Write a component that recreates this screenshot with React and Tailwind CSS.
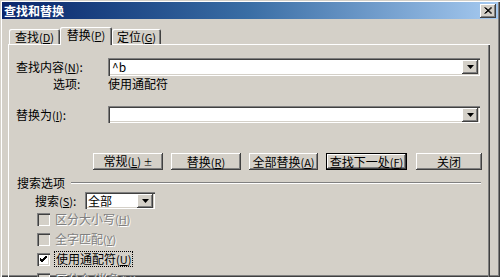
import React from 'react';

const sunken = 'bg-white shadow-[inset_1px_1px_0_#808080,inset_2px_2px_0_#404040,inset_-1px_-1px_0_#ffffff,inset_-2px_-2px_0_#d4d0c8]';
const raised = 'bg-[#d4d0c8] shadow-[inset_-1px_-1px_0_#404040,inset_1px_1px_0_#ffffff,inset_-2px_-2px_0_#808080,inset_2px_2px_0_#d4d0c8]';

const Arrow = () => (
  <div className={`${raised} w-[16px] h-[14px] flex items-center justify-center shrink-0`}>
    <svg width="7" height="4" viewBox="0 0 7 4">
      <polygon points="0,0 7,0 3.5,4" fill="#000" />
    </svg>
  </div>
);

const Key = ({ k }) => (
  <span className="text-[11px]">(<span className="underline">{k}</span>)</span>
);

const Button = ({ w, children, primary, className = '' }) => (
  <div className={`h-[17px] shrink-0 ${primary ? 'border border-black' : ''} ${className}`} style={{ width: w }}>
    <div className={`${raised} h-full flex items-center justify-center`}>{children}</div>
  </div>
);

const Check = ({ label, k, checked, disabled }) => (
  <div className="h-[20px] flex items-center pl-[29px]">
    <div className={`w-[13px] h-[13px] shrink-0 flex items-center justify-center ${disabled ? 'bg-[#d4d0c8]' : 'bg-white'} shadow-[inset_1px_1px_0_#808080,inset_2px_2px_0_#404040,inset_-1px_-1px_0_#ffffff,inset_-2px_-2px_0_#d4d0c8]`}>
      {checked && (
        <svg width="7" height="7" viewBox="0 0 7 7">
          <path d="M0 3 L2 5 L7 0 M0 4 L2 6 L7 1 M0 2 L2 4 L7 -1" stroke="#000" strokeWidth="1" fill="none" />
        </svg>
      )}
    </div>
    <span
      className={`ml-[4px] px-[1px] ${disabled ? 'text-[#808080] [text-shadow:1px_1px_0_#fff]' : 'text-black border border-dotted border-black'}`}
    >
      {label}<Key k={k} />
    </span>
  </div>
);

export default function App() {
  return (
    <div
      className="w-[500px] h-[277px] overflow-hidden bg-[#d4d0c8] p-[2px] flex flex-col text-[12px] leading-[14px] text-black shadow-[inset_1px_1px_0_#d4d0c8,inset_2px_2px_0_#ffffff,inset_-1px_-1px_0_#404040,inset_-2px_-2px_0_#808080]"
      style={{ fontFamily: '"Noto Sans CJK SC", "Noto Sans", sans-serif' }}
    >
      {/* Title bar */}
      <div className="h-[17px] shrink-0 flex items-center justify-between pl-[2px] pr-[2px] bg-gradient-to-r from-[#0a246a] via-[#3a6ea5] to-[#a6caf0]">
        <span className="text-white font-bold">查找和替换</span>
        <div className={`${raised} w-[16px] h-[14px] flex items-center justify-center`}>
          <svg width="8" height="7" viewBox="0 0 8 7">
            <path d="M0.5 0.5 L7 6.5 M1.5 0.5 L8 6.5 M7 0.5 L0.5 6.5 M8 0.5 L1.5 6.5" stroke="#000" strokeWidth="1" />
          </svg>
        </div>
      </div>

      {/* Body */}
      <div className="flex-1 flex flex-col pl-[6px] pr-[8px] pt-[8px]">
        {/* Tabs */}
        <div className="flex items-end h-[18px] pl-[1px] relative z-10 -mb-[1px]">
          <div className="w-[51px] h-[15px] flex items-center justify-center rounded-t-[2px] shadow-[inset_1px_1px_0_#ffffff,inset_-1px_0_0_#404040,inset_-2px_0_0_#808080] mb-[1px]">
            <span>查找<Key k="D" /></span>
          </div>
          <div className="w-[52px] h-[18px] flex items-start pt-[1px] justify-center rounded-t-[2px] bg-[#d4d0c8] shadow-[inset_1px_1px_0_#ffffff,inset_-1px_0_0_#404040,inset_-2px_0_0_#808080]">
            <span>替换<Key k="P" /></span>
          </div>
          <div className="w-[49px] h-[15px] flex items-center justify-center rounded-t-[2px] shadow-[inset_1px_1px_0_#ffffff,inset_-1px_0_0_#404040,inset_-2px_0_0_#808080] mb-[1px]">
            <span>定位<Key k="G" /></span>
          </div>
        </div>

        {/* Panel */}
        <div className="flex-1 flex flex-col pt-[14px] shadow-[inset_1px_1px_0_#ffffff,inset_-1px_0_0_#404040,inset_-2px_0_0_#808080]">
          <div className="flex items-center h-[18px]">
            <span className="w-[100px] pl-[8px] shrink-0">查找内容<Key k="N" />:</span>
            <div className={`${sunken} w-[372px] h-[18px] flex items-center justify-between pl-[4px] pr-[2px]`}>
              <span>^b</span>
              <Arrow />
            </div>
          </div>

          <div className="flex items-center h-[16px]">
            <span className="w-[100px] pl-[45px] shrink-0">选项:</span>
            <span>使用通配符</span>
          </div>

          <div className="flex items-center h-[17px] mt-[14px]">
            <span className="w-[100px] pl-[8px] shrink-0">替换为<Key k="I" />:</span>
            <div className={`${sunken} w-[372px] h-[17px] flex items-center justify-end pr-[2px]`}>
              <Arrow />
            </div>
          </div>

          <div className="flex items-center gap-[8px] mt-[30px] pl-[85px]">
            <Button w={70}><span>常规<Key k="L" /> <span className="text-[9px]">±</span></span></Button>
            <Button w={70}><span>替换<Key k="R" /></span></Button>
            <Button w={69}><span>全部替换<Key k="A" /></span></Button>
            <Button w={81} primary><span>查找下一处<Key k="F" /></span></Button>
            <Button w={66} className="ml-[1px]"><span>关闭</span></Button>
          </div>

          <div className="flex items-center h-[14px] mt-[6px] pl-[9px] pr-[9px]">
            <span className="shrink-0">搜索选项</span>
            <div className="flex-1 ml-[6px] h-[2px] border-t border-[#808080] border-b border-b-white" />
          </div>

          <div className="flex items-center h-[17px] mt-[2px]">
            <span className="w-[77px] pl-[27px] shrink-0">搜索<Key k="S" />:</span>
            <div className={`${sunken} w-[70px] h-[17px] flex items-center justify-between pl-[3px] pr-[2px]`}>
              <span>全部</span>
              <Arrow />
            </div>
          </div>

          <Check label="区分大小写" k="H" disabled />
          <Check label="全字匹配" k="Y" disabled />
          <Check label="使用通配符" k="U" checked />
          <Check label="区分全/半角" k="M" disabled />
        </div>
      </div>
    </div>
  );
}
